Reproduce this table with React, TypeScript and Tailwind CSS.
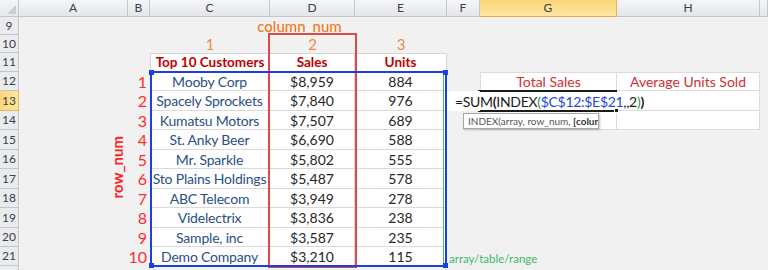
import React from "react";

const names = ["Mooby Corp","Spacely Sprockets","Kumatsu Motors","St. Anky Beer","Mr. Sparkle","Sto Plains Holdings","ABC Telecom","Videlectrix","Sample, inc","Demo Company"];
const sales = ["$8,959","$7,840","$7,507","$6,690","$5,802","$5,487","$3,949","$3,836","$3,587","$3,210"];
const units = ["884","976","689","588","555","578","278","238","235","115"];
const cols = ["A","B","C","D","E","F","G","H",""];
const rowNums = [9,10,11,12,13,14,15,16,17,18,19,20,21,22];

const F = { fontFamily: "Lato, 'Noto Sans', sans-serif" } as const;

export default function App() {
  const cells: React.ReactNode[] = [];
  cells.push(
    <div key="corner" className="relative border-r border-b border-[#c3c7cd] bg-gradient-to-b from-[#f4f5f7] to-[#e6e8ec]">
      <div className="absolute right-[2px] bottom-[2px] w-0 h-0 border-l-[9px] border-l-transparent border-b-[9px] border-b-[#c9ccd1]" />
    </div>
  );
  cols.forEach((c, i) => {
    const active = c === "G";
    cells.push(
      <div key={"h" + i} className={`flex items-center justify-center text-[12px] text-[#404040] border-r border-b ${active ? "bg-gradient-to-b from-[#f9d57a] to-[#fde7a0] border-r-[#e2b65a] border-b-[#e8a94a]" : "bg-gradient-to-b from-[#f5f6f8] to-[#e3e6ea] border-[#c3c7cd]"}`}>
        {c}
      </div>
    );
  });

  rowNums.forEach((r) => {
    const active = r === 13;
    cells.push(
      <div key={"r" + r} className={`flex items-center justify-center text-[12px] text-[#404040] border-r border-b ${active ? "bg-gradient-to-r from-[#f9d57a] to-[#fde7a0] border-[#e2b65a]" : "bg-[#e9ebef] border-[#c3c7cd]"}`}>
        {r === 22 ? "" : r}
      </div>
    );
    for (let ci = 0; ci < 9; ci++) {
      const col = cols[ci];
      let content: React.ReactNode = null;
      let cls = "";
      const di = r - 12;
      if (col === "B" && r >= 12 && r <= 21) {
        content = <span className="text-[16px] text-[#ff2d2d] leading-none">{di + 1}</span>;
        cls = "justify-end pr-[3px]";
      } else if (r === 10 && (col === "C" || col === "D" || col === "E")) {
        content = <span className="text-[15px] text-[#f08a3c]">{col === "C" ? 1 : col === "D" ? 2 : 3}</span>;
        cls = "justify-center";
      } else if (r === 9 && col === "D") {
        content = <span className="text-[15px] text-[#f07a22] font-medium whitespace-nowrap ml-[-26px]">column_num</span>;
        cls = "justify-center overflow-visible";
      } else if (r === 11 && (col === "C" || col === "D" || col === "E")) {
        content = <span className="text-[13.5px] font-bold text-[#c00000] whitespace-nowrap">{col === "C" ? "Top 10 Customers" : col === "D" ? "Sales" : "Units"}</span>;
        cls = `justify-center bg-white border-r border-b border-t border-[#d6d6d6] ${col === "C" ? "border-l" : ""}`;
      } else if (r >= 12 && r <= 21 && (col === "C" || col === "D" || col === "E")) {
        const t = col === "C" ? names[di] : col === "D" ? sales[di] : units[di];
        content = <span className={`text-[14px] whitespace-nowrap ${col === "C" ? "text-[#2a4f86] tracking-[-0.2px]" : "text-[#262626]"}`}>{t}</span>;
        cls = `justify-center bg-white border-r border-b border-[#d9d9d9]`;
      } else if (r === 12 && (col === "G" || col === "H")) {
        content = <span className="text-[14px] text-[#d23030] whitespace-nowrap">{col === "G" ? "Total Sales" : "Average Units Sold"}</span>;
        cls = `justify-center bg-white border-r border-b border-t border-[#dcdcdc] ${col === "G" ? "border-l" : ""}`;
      } else if (r === 13 && col === "F") {
        content = (
          <span className="text-[14px] text-[#1a1a1a] whitespace-nowrap pl-[8px] tracking-[-0.3px]">
            =SUM<b className="font-bold">(</b>INDEX<span className="text-[#1f9a3a]">(</span><span className="text-[#2546d8]">$C$12:$E$21</span>,,2<span className="text-[#1f9a3a]">)</span><b className="font-bold">)</b>
          </span>
        );
        cls = "bg-white overflow-visible z-10 justify-start";
      } else if (r === 13 && col === "G") {
        cls = "bg-white";
      } else if ((r === 13 || r === 14) && col === "H") {
        cls = "bg-white border-r border-b border-[#dcdcdc]";
      } else if (r === 14 && col === "G") {
        cls = "bg-white border-r border-b border-l border-[#dcdcdc]";
      }
      cells.push(
        <div key={r + "-" + ci} className={`flex items-center min-w-0 ${cls}`}>
          {content}
        </div>
      );
    }
  });

  return (
    <div className="relative w-[768px] h-[270px] overflow-hidden bg-[#f1f1f1]" style={F}>
      <div className="grid grid-cols-[19px_109px_22px_120px_85px_92px_33px_137px_143px_8px] grid-rows-[17px_18px_18px_19px_19px_20px_19px_20px_19px_20px_19px_20px_19px_19px_10px]">
        {cells}
      </div>

      {/* row_num vertical label */}
      <div className="absolute left-[108px] top-[138px] w-[18px] h-[58px] flex items-center justify-center">
        <span className="-rotate-90 whitespace-nowrap text-[15px] font-bold text-[#ff1f1f]">row_num</span>
      </div>

      {/* red column box */}
      <div className="absolute left-[268px] top-[33px] w-[89px] h-[235px] border-2 border-[#e0474a]" />

      {/* blue range selection */}
      <div className="absolute left-[150px] top-[71px] w-[297px] h-[196px] border-2 border-[#1d3ee6]">
        <div className="absolute right-[1px] top-0 bottom-0 w-px bg-[#3cc06a]" />
        <div className="absolute -left-[3px] -top-[3px] w-[5px] h-[5px] bg-[#1d3ee6]" />
        <div className="absolute -right-[3px] -top-[3px] w-[5px] h-[5px] bg-[#1d3ee6]" />
        <div className="absolute -left-[3px] -bottom-[3px] w-[5px] h-[5px] bg-[#1d3ee6]" />
        <div className="absolute -right-[3px] -bottom-[3px] w-[5px] h-[5px] bg-[#1d3ee6]" />
      </div>

      {/* active cell border G13 */}
      <div className="absolute left-[478px] top-[90px] w-[139px] h-[2px] bg-[#1a1a1a]" />
      <div className="absolute left-[478px] top-[110px] w-[139px] h-[2px] bg-[#1a1a1a]" />
      <div className="absolute left-[614px] top-[108px] w-[5px] h-[5px] bg-[#1a1a1a] border border-white" />

      {/* tooltip */}
      <div className="absolute left-[463px] top-[113px] w-[136px] h-[16px] bg-white border border-[#a8a8a8] shadow-[1px_1px_2px_rgba(0,0,0,0.25)] overflow-hidden flex items-center pl-[4px]">
        <span className="text-[10px] text-[#555] whitespace-nowrap">INDEX(array, row_num, <b className="font-bold text-[#333]">[column</b></span>
      </div>

      {/* array/table/range label */}
      <div className="absolute left-[449px] top-[250px] text-[11.5px] text-[#3dbb6c] whitespace-nowrap">array/table/range</div>
    </div>
  );
}
